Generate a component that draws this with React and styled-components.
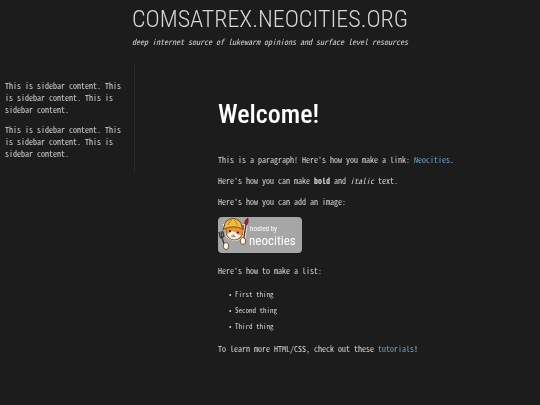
import React from 'react';
import styled, { createGlobalStyle } from 'styled-components';

const mono = '"Noto Sans Mono CJK JP", "Liberation Mono", monospace';
const display = '"Roboto Condensed", Roboto, sans-serif';

const GlobalStyle = createGlobalStyle`
  body {
    margin: 0;
    background: #1c1c1c;
    color: #d6d6d6;
    font-family: ${mono};
    font-size: 8px;
    line-height: 12px;
  }
`;

const Page = styled.div`
  will-change: transform;
`;

const Header = styled.header`
  padding-top: 2px;
  text-align: center;
`;

const SiteTitle = styled.h1`
  margin: 0;
  font-family: ${display};
  font-size: 24px;
  font-weight: 300;
  line-height: 34px;
`;

const Tagline = styled.p`
  margin: 0;
  font-style: italic;
`;

const Columns = styled.div`
  display: grid;
  grid-template-columns: 1fr 3fr;
  align-items: start;
  margin-top: 16px;
`;

const Sidebar = styled.aside`
  padding: 16px 8px 12px 5px;
  border-right: 1px solid #2b2b2b;

  p {
    margin: 0;
  }

  p + p {
    margin-top: 8px;
  }
`;

const Content = styled.main`
  padding: 34px 16px 32px 83px;
`;

const Heading = styled.h2`
  margin: 0 0 24px;
  color: #fff;
  font-family: ${display};
  font-size: 26px;
  font-weight: 500;
  line-height: 32px;
`;

const Text = styled.p`
  margin: 0 0 9px;
`;

const Link = styled.a`
  color: #6ca6cd;
  text-decoration: none;
`;

const Badge = styled.svg`
  display: block;
  width: 84px;
  height: 36px;
  margin-bottom: 12px;
`;

const BadgeText = styled.text`
  fill: #fff;
  font-family: ${display};
  font-size: ${props => props.$size}px;
`;

const List = styled.ul`
  margin: 0 0 9px;
  padding-left: 17px;
  font-size: 7px;
  line-height: 16px;
  list-style-type: '• ';
`;

const NeocitiesBadge = () => (
  <Badge viewBox="0 0 84 36" role="img" aria-label="Hosted by Neocities">
    <rect width="84" height="36" rx="4" fill="#a6a6a6" />
    {/* head */}
    <path
      d="M8 13 6 8l4-1 12 3 4-2-1 7c0 5-4 8-9 8-5-1-9-4-8-10Z"
      fill="#ee9136"
      stroke="#fff"
      strokeWidth="2"
    />
    <path
      d="M8 13 6 8l4-1 12 3 4-2-1 7c0 5-4 8-9 8-5-1-9-4-8-10Z"
      fill="#ee9136"
      stroke="#3a2412"
      strokeWidth=".7"
    />
    <path d="M9 17q3-1 5-3l3 1q2 3 6 3-2 4-7 4.5-5-1-7-5.5Z" fill="#fff6ea" />
    <circle cx="12" cy="14" r="1" fill="#1d1511" />
    <circle cx="20" cy="15.5" r="1" fill="#1d1511" />
    <path d="m14.5 17.5 2 .4-1.2 1Z" fill="#3a2412" />
    <path d="m13 19 2.3.7 2.2-.2" fill="none" stroke="#3a2412" strokeWidth=".6" />
    {/* hard hat */}
    <path
      d="M6 10Q7 2 15 1.5 23 2 24 10l1.5 2.5Q16 7 5 12.5Z"
      fill="#efbc3c"
      stroke="#57390f"
      strokeWidth=".8"
    />
    <path d="M10 8q1-4 4-5M19 8q0-3-3-5" fill="none" stroke="#a7741d" strokeWidth=".8" />
    {/* brush */}
    <path d="M28 8 25 26" stroke="#fff" strokeWidth="3" />
    <path d="M28 8 25 26" stroke="#55301b" strokeWidth="1.5" />
    <path d="m26.5 7 1-4L30 1l.2 4-1.4 3Z" fill="#b3202b" stroke="#4d1216" strokeWidth=".6" />
    {/* fork */}
    <path
      d="M1 15l1 5q2 2 4-1l-1.500-5M3 14.500 4 21l4 11"
      fill="none"
      stroke="#34343a"
      strokeWidth="1.3"
    />
    <ellipse cx="8" cy="29" rx="2.700" ry="3.500" fill="#fff3e2" stroke="#3b2b20" strokeWidth=".7" />
    <ellipse cx="25" cy="24" rx="2.700" ry="3.500" fill="#fff3e2" stroke="#3b2b20" strokeWidth=".7" />
    <BadgeText x="32" y="14" $size={7}>
      hosted by
    </BadgeText>
    <BadgeText x="31" y="28" $size={13}>
      neocities
    </BadgeText>
  </Badge>
);

const sidebarText =
  'This is sidebar content. This is sidebar content. This is sidebar content.';

export default function App() {
  return (
    <Page>
      <GlobalStyle />
      <Header>
        <SiteTitle>COMSATREX.NEOCITIES.ORG</SiteTitle>
        <Tagline>
          deep internet source of lukewarm opinions and surface level resources
        </Tagline>
      </Header>
      <Columns>
        <Sidebar>
          <p>{sidebarText}</p>
          <p>{sidebarText}</p>
        </Sidebar>
        <Content>
          <Heading>Welcome!</Heading>
          <Text>
            This is a paragraph! Here&apos;s how you make a link:{' '}
            <Link href="https://neocities.org">Neocities</Link>.
          </Text>
          <Text>
            Here&apos;s how you can make <strong>bold</strong> and{' '}
            <em>italic</em> text.
          </Text>
          <Text>Here&apos;s how you can add an image:</Text>
          <NeocitiesBadge />
          <Text>Here&apos;s how to make a list:</Text>
          <List>
            <li>First thing</li>
            <li>Second thing</li>
            <li>Third thing</li>
          </List>
          <Text>
            To learn more HTML/CSS, check out these{' '}
            <Link href="https://neocities.org/tutorials">tutorials</Link>!
          </Text>
        </Content>
      </Columns>
    </Page>
  );
}
